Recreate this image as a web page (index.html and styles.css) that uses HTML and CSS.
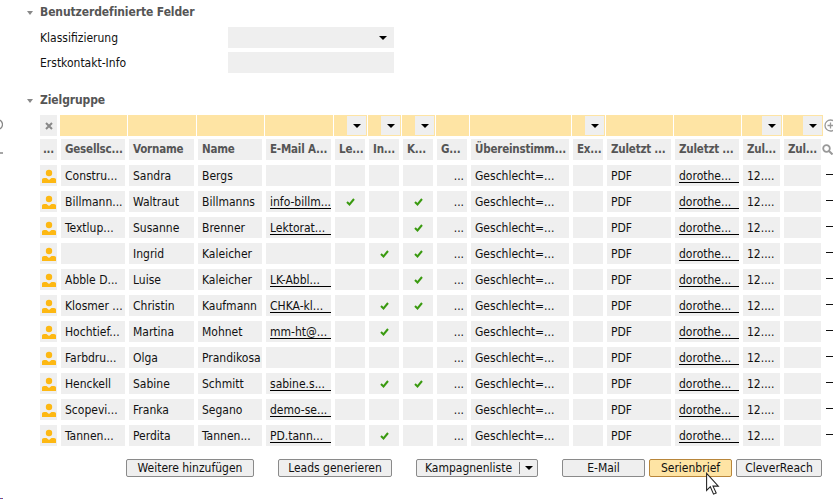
FILE: index.html
```html
<!DOCTYPE html>
<html lang="de">
<head>
<meta charset="utf-8">
<title>Zielgruppe</title>
<link rel="stylesheet" href="styles.css">
</head>
<body>
<svg class="defs" width="0" height="0">
<symbol id="p" viewBox="0 0 14 14"><circle cx="7" cy="4" r="3.200" fill="#fdb813"/><path d="M0 14V10.500Q0 9 2 9H4.500L7 11 9.500 9H12Q14 9 14 10.500V14Z" fill="#fdb813"/></symbol>
<symbol id="k" viewBox="0 0 9 8"><path d="M1 4l2.500 2.500L8 1" fill="none" stroke="#3a9a10" stroke-width="2"/></symbol>
</svg>
<div class="sec sec1"><span class="tri"></span>Benutzerdefinierte Felder</div>
<div class="form">
<div class="frow"><label>Klassifizierung</label><div class="inp"><span class="arr"></span></div></div>
<div class="frow"><label>Erstkontakt-Info</label><div class="inp"></div></div>
</div>
<div class="sec sec2"><span class="tri"></span>Zielgruppe</div>
<div class="grid">
<div class="edge"><svg width="3" height="13" viewBox="0 0 3 13"><circle cx="-2.500" cy="6.500" r="5" fill="none" stroke="#888" stroke-width="1.300"/></svg></div>
<div class="c ctr fx"><svg width="8" height="8" viewBox="0 0 8 8"><path d="M1 1l6 6M7 1l-6 6" stroke="#888" stroke-width="2"/></svg></div>
<div class="f"></div><div class="f"></div><div class="f"></div><div class="f"></div>
<div class="f"><i><span class="arr"></span></i></div><div class="f"><i><span class="arr"></span></i></div><div class="f"><i><span class="arr"></span></i></div>
<div class="f"></div><div class="f"></div>
<div class="f"><i><span class="arr"></span></i></div>
<div class="f"></div><div class="f"></div>
<div class="f"><i><span class="arr"></span></i></div><div class="f"><i><span class="arr"></span></i></div>
<div class="side fx"><svg width="9" height="13" viewBox="0 0 9 13"><circle cx="6.500" cy="6.500" r="5.500" fill="none" stroke="#999" stroke-width="1.300"/><path d="M3.500 6.500h6M6.500 3.500v6" stroke="#999" stroke-width="1.300"/></svg></div>

<div class="edge low"><svg width="3" height="5" viewBox="0 0 3 5"><path d="M0 2h3" stroke="#888" stroke-width="1.500"/></svg></div>
<div class="c ctr gh">...</div>
<div class="c gh">Gesellsc...</div><div class="c gh">Vorname</div><div class="c gh">Name</div><div class="c gh">E-Mail A...</div><div class="c gh">Le...</div><div class="c gh">In...</div><div class="c gh">K...</div><div class="c gh">G...</div><div class="c gh">Übereinstimm...</div><div class="c gh">Ex...</div><div class="c gh">Zuletzt ...</div><div class="c gh">Zuletzt ...</div><div class="c gh">Zul...</div><div class="c gh">Zul...</div>
<div class="side"><svg width="11" height="11" viewBox="0 0 11 11"><circle cx="4.500" cy="4.500" r="3.300" fill="none" stroke="#999" stroke-width="1.800"/><path d="M7 7l3.500 3.500" stroke="#999" stroke-width="2"/></svg></div>

<div></div><div class="c ctr"><svg class="pi"><use href="#p"/></svg></div><div class="c">Constru...</div><div class="c">Sandra</div><div class="c">Bergs</div><div class="c"></div><div class="c"></div><div class="c"></div><div class="c"></div><div class="c rt">...</div><div class="c">Geschlecht=...</div><div class="c"></div><div class="c">PDF</div><div class="c ln"><span>dorothe...</span></div><div class="c">12....</div><div class="c"></div><div class="dash"><b></b></div>

<div></div><div class="c ctr"><svg class="pi"><use href="#p"/></svg></div><div class="c">Billmann...</div><div class="c">Waltraut</div><div class="c">Billmanns</div><div class="c ln"><span>info-billm...</span></div><div class="c ctr"><svg class="ok"><use href="#k"/></svg></div><div class="c"></div><div class="c ctr"><svg class="ok"><use href="#k"/></svg></div><div class="c rt">...</div><div class="c">Geschlecht=...</div><div class="c"></div><div class="c">PDF</div><div class="c ln"><span>dorothe...</span></div><div class="c">12....</div><div class="c"></div><div class="dash"><b></b></div>

<div></div><div class="c ctr"><svg class="pi"><use href="#p"/></svg></div><div class="c">Textlup...</div><div class="c">Susanne</div><div class="c">Brenner</div><div class="c ln"><span>Lektorat...</span></div><div class="c"></div><div class="c"></div><div class="c ctr"><svg class="ok"><use href="#k"/></svg></div><div class="c rt">...</div><div class="c">Geschlecht=...</div><div class="c"></div><div class="c">PDF</div><div class="c ln"><span>dorothe...</span></div><div class="c">12....</div><div class="c"></div><div class="dash"><b></b></div>

<div></div><div class="c ctr"><svg class="pi"><use href="#p"/></svg></div><div class="c"></div><div class="c">Ingrid</div><div class="c">Kaleicher</div><div class="c"></div><div class="c"></div><div class="c ctr"><svg class="ok"><use href="#k"/></svg></div><div class="c ctr"><svg class="ok"><use href="#k"/></svg></div><div class="c rt">...</div><div class="c">Geschlecht=...</div><div class="c"></div><div class="c">PDF</div><div class="c ln"><span>dorothe...</span></div><div class="c">12....</div><div class="c"></div><div class="dash"><b></b></div>

<div></div><div class="c ctr"><svg class="pi"><use href="#p"/></svg></div><div class="c">Abble D...</div><div class="c">Luise</div><div class="c">Kaleicher</div><div class="c ln"><span>LK-Abbl...</span></div><div class="c"></div><div class="c"></div><div class="c ctr"><svg class="ok"><use href="#k"/></svg></div><div class="c rt">...</div><div class="c">Geschlecht=...</div><div class="c"></div><div class="c">PDF</div><div class="c ln"><span>dorothe...</span></div><div class="c">12....</div><div class="c"></div><div class="dash"><b></b></div>

<div></div><div class="c ctr"><svg class="pi"><use href="#p"/></svg></div><div class="c">Klosmer ...</div><div class="c">Christin</div><div class="c">Kaufmann</div><div class="c ln"><span>CHKA-kl...</span></div><div class="c"></div><div class="c ctr"><svg class="ok"><use href="#k"/></svg></div><div class="c ctr"><svg class="ok"><use href="#k"/></svg></div><div class="c rt">...</div><div class="c">Geschlecht=...</div><div class="c"></div><div class="c">PDF</div><div class="c ln"><span>dorothe...</span></div><div class="c">12....</div><div class="c"></div><div class="dash"><b></b></div>

<div></div><div class="c ctr"><svg class="pi"><use href="#p"/></svg></div><div class="c">Hochtief...</div><div class="c">Martina</div><div class="c">Mohnet</div><div class="c ln"><span>mm-ht@...</span></div><div class="c"></div><div class="c ctr"><svg class="ok"><use href="#k"/></svg></div><div class="c"></div><div class="c rt">...</div><div class="c">Geschlecht=...</div><div class="c"></div><div class="c">PDF</div><div class="c ln"><span>dorothe...</span></div><div class="c">12....</div><div class="c"></div><div class="dash"><b></b></div>

<div></div><div class="c ctr"><svg class="pi"><use href="#p"/></svg></div><div class="c">Farbdru...</div><div class="c">Olga</div><div class="c">Prandikosa</div><div class="c"></div><div class="c"></div><div class="c"></div><div class="c"></div><div class="c rt">...</div><div class="c">Geschlecht=...</div><div class="c"></div><div class="c">PDF</div><div class="c ln"><span>dorothe...</span></div><div class="c">12....</div><div class="c"></div><div class="dash"><b></b></div>

<div></div><div class="c ctr"><svg class="pi"><use href="#p"/></svg></div><div class="c">Henckell</div><div class="c">Sabine</div><div class="c">Schmitt</div><div class="c ln"><span>sabine.s...</span></div><div class="c"></div><div class="c ctr"><svg class="ok"><use href="#k"/></svg></div><div class="c ctr"><svg class="ok"><use href="#k"/></svg></div><div class="c rt">...</div><div class="c">Geschlecht=...</div><div class="c"></div><div class="c">PDF</div><div class="c ln"><span>dorothe...</span></div><div class="c">12....</div><div class="c"></div><div class="dash"><b></b></div>

<div></div><div class="c ctr"><svg class="pi"><use href="#p"/></svg></div><div class="c">Scopevi...</div><div class="c">Franka</div><div class="c">Segano</div><div class="c ln"><span>demo-se...</span></div><div class="c"></div><div class="c"></div><div class="c"></div><div class="c rt">...</div><div class="c">Geschlecht=...</div><div class="c"></div><div class="c">PDF</div><div class="c ln"><span>dorothe...</span></div><div class="c">12....</div><div class="c"></div><div class="dash"><b></b></div>

<div></div><div class="c ctr"><svg class="pi"><use href="#p"/></svg></div><div class="c">Tannen...</div><div class="c">Perdita</div><div class="c">Tannen...</div><div class="c ln"><span>PD.tann...</span></div><div class="c"></div><div class="c ctr"><svg class="ok"><use href="#k"/></svg></div><div class="c"></div><div class="c rt">...</div><div class="c">Geschlecht=...</div><div class="c"></div><div class="c">PDF</div><div class="c ln"><span>dorothe...</span></div><div class="c">12....</div><div class="c"></div><div class="dash"><b></b></div>
</div>
<div class="btns">
<button class="b b1">Weitere hinzufügen</button>
<button class="b b2">Leads generieren</button>
<div class="b b3"><span>Kampagnenliste</span><em><span class="arr"></span></em></div>
<button class="b b4">E-Mail</button>
<button class="b b5">Serienbrief</button>
<button class="b b6">CleverReach</button>
</div>
<svg class="cursor" width="16" height="24" viewBox="0 0 15 22"><path d="M1.500 1V17L5 13.500 8 20.500 10.500 19.500 7.500 13H12.500Z" fill="#fff" stroke="#222" stroke-width="1"/></svg>
<div class="pix"></div>
</body>
</html>
```
FILE: styles.css
```css
* { box-sizing: border-box; }
html, body { margin: 0; height: 499px; overflow: hidden; background: #fff; }
body { position: relative; width: 833px; padding-top: 2px; font: 12px/21px "DejaVu Sans Condensed", "DejaVu Sans", sans-serif; font-stretch: condensed; color: #111; }
.defs { position: absolute; }
.sec { height: 21px; display: flex; align-items: center; padding-left: 27px; font-weight: bold; color: #555; gap: 7px; letter-spacing: -0.1px; }
.sec2 { margin-top: 17px; }
.tri { width: 0; height: 0; border: 3px solid transparent; border-top: 4px solid #888; border-bottom: 0; }
.form { padding: 4px 0 0 40px; }
.frow { display: flex; height: 21px; margin-bottom: 4px; }
.frow label { width: 188px; padding-top: 1px; }
.inp { width: 166px; background: #efefef; display: flex; align-items: center; justify-content: flex-end; padding-right: 7px; }
.arr { display: block; width: 0; height: 0; border: 4px solid transparent; border-top: 4px solid #000; border-bottom: 0; }
.grid { display: grid; margin-top: 4px; grid-template-columns: 36px 17px 64px 65px 64px 65px 30px 30px 30px 30px 98px 30px 64px 64px 37px 37px 8px; grid-template-rows: 19px repeat(12, 21px); column-gap: 4px; row-gap: 5px; }
.c { background: #efefef; padding: 1px 0 0 4px; white-space: nowrap; overflow: hidden; }
.gh { font-weight: bold; color: #555; font-size: 11.500px; letter-spacing: -0.2px; padding-top: 0; }
.f { height: 21px; background: #fee4a4; margin: 0 -2px 0 -1px; border: 1px solid #fee4a4; display: flex; justify-content: flex-end; }
.f i { width: 19px; background: #efefef; display: flex; align-items: center; justify-content: center; }
.fx { height: 21px; }
.ctr { display: flex; align-items: center; justify-content: center; padding: 0; }
.pi { width: 14px; height: 14px; }
.ok { width: 9px; height: 8px; }
.rt { text-align: right; padding-right: 3px; }
.ln span { display: block; height: 17px; border-bottom: 1px solid #000; }
.dash { display: flex; justify-content: flex-end; padding-top: 9px; }
.dash b { display: block; width: 7px; height: 1px; background: #111; }
.side { display: flex; align-items: center; justify-content: flex-end; margin-left: -3px; }
.edge { display: flex; align-items: center; justify-content: flex-start; }
.low { padding-top: 7px; }
.btns { display: flex; height: 18px; margin-top: 13px; padding-left: 126px; }
.b { height: 18px; border: 1px solid #8a8a8a; border-radius: 2px; background: #efefef; font: inherit; font-stretch: condensed; line-height: 15px; color: #111; padding: 0; text-align: center; }
.b1 { width: 128px; margin-right: 24px; }
.b2 { width: 114px; margin-right: 24px; }
.b3 { width: 122px; margin-right: 24px; display: flex; align-items: center; padding-left: 1px; }
.b3 > span { flex: 1; }
.b3 em { width: 18px; height: 12px; border-left: 1px solid #777; display: flex; align-items: center; justify-content: center; }
.b4 { width: 83px; margin-right: 4px; }
.b5 { width: 83px; margin-right: 4px; background: #fee4a4; border-color: #b8863b; }
.b6 { width: 86px; }
.cursor { position: absolute; left: 705px; top: 472px; }
.pix { position: absolute; left: 0; top: 498px; width: 3px; height: 1px; background: linear-gradient(90deg, #36c 0 33%, #d33 33% 66%, #36c 66%); }
```
